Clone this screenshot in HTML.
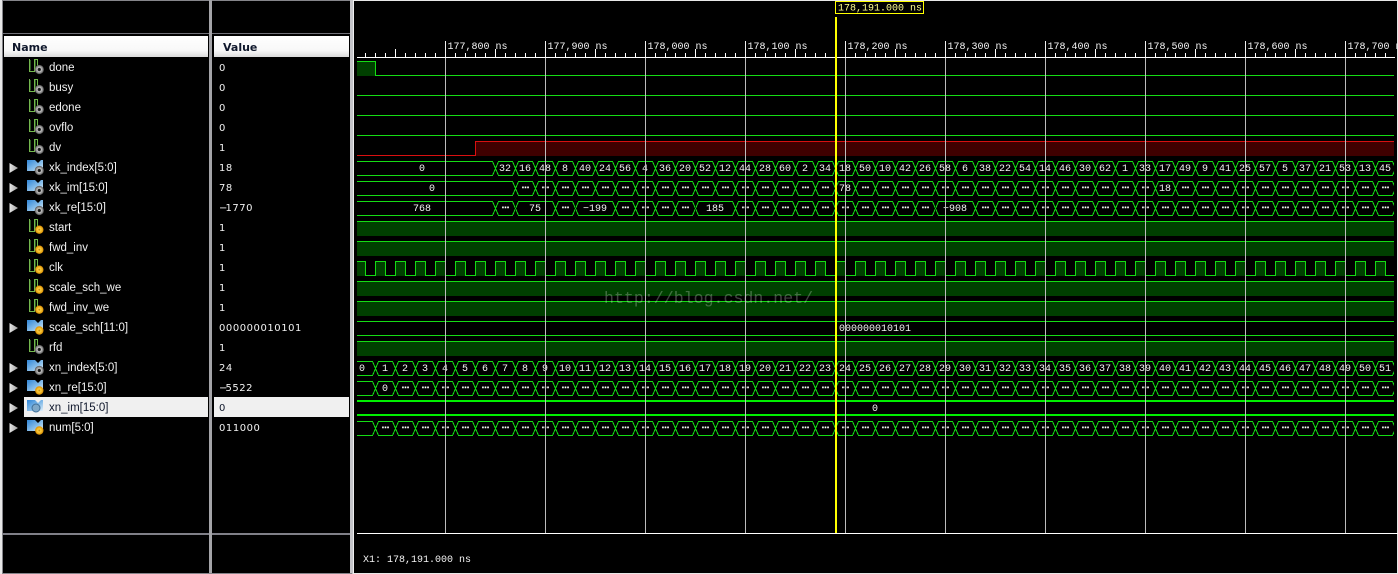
<!DOCTYPE html>
<html><head><meta charset="utf-8"><title>Waveform</title>
<style>
html,body{margin:0;padding:0;background:#000;width:1398px;height:574px;overflow:hidden}
svg{position:absolute;left:0;top:0;display:block}
.n{font:11.5px "Liberation Sans",sans-serif;fill:#f2f2f2}
.v{font:10px "DejaVu Sans",sans-serif;letter-spacing:.55px;fill:#f2f2f2}
.h{font:bold 11px "DejaVu Sans",sans-serif;fill:#10182c}
.t{font:10px "Liberation Mono",monospace;fill:#f4f4f4}
.c{text-anchor:middle}
</style></head><body>
<svg width="1398" height="574" viewBox="0 0 1398 574" xmlns="http://www.w3.org/2000/svg">
<defs>
<linearGradient id="hd" x1="0" y1="0" x2="0" y2="1"><stop offset="0" stop-color="#fff"/><stop offset=".7" stop-color="#f8f8f8"/><stop offset="1" stop-color="#dcdcdc"/></linearGradient>
<linearGradient id="ar" x1="0" y1="0" x2="1" y2="0"><stop offset="0" stop-color="#e8e8e8"/><stop offset="1" stop-color="#a0a0a0"/></linearGradient>
<linearGradient id="bl" x1="0" y1="0" x2="1" y2="1"><stop offset="0" stop-color="#2f86d8"/><stop offset=".6" stop-color="#8cc0ea"/><stop offset="1" stop-color="#e4f2fb"/></linearGradient>
<radialGradient id="gc"><stop offset="0" stop-color="#111"/><stop offset=".3" stop-color="#222"/><stop offset=".42" stop-color="#c4c4c4"/><stop offset=".8" stop-color="#808080"/><stop offset="1" stop-color="#444"/></radialGradient>
<radialGradient id="oc"><stop offset="0" stop-color="#b87800"/><stop offset=".35" stop-color="#ffd040"/><stop offset="1" stop-color="#d88c00"/></radialGradient>
<g id="wave"><path d="M29.5 59v12.5h5V59.5h3v8" fill="none" stroke="#74b84e" stroke-width="1"/><path d="M30.5 60v10.5M35.5 60v9" fill="none" stroke="#2c5a20"/></g>
<g id="lg"><use href="#wave"/><circle cx="39.3" cy="69.5" r="4.6" fill="url(#gc)"/></g>
<g id="lo"><use href="#wave"/><circle cx="39.3" cy="69.7" r="4.2" fill="url(#oc)"/></g>
<path id="fold" d="M27 60h8l3 3 3-3h2v11H27z" fill="url(#bl)"/>
<g id="bg"><use href="#fold"/><circle cx="39.3" cy="70.5" r="4.6" fill="url(#gc)"/></g>
<g id="bo"><use href="#fold"/><circle cx="39.3" cy="70.5" r="4.2" fill="url(#oc)"/></g>
<g id="bb"><use href="#fold"/><circle cx="36" cy="68" r="4" fill="#7fa8c8" stroke="#3f6f98"/></g>
<path id="arrow" d="M9.5 63v10l8.5-5z" fill="url(#ar)"/>
<pattern id="hx" patternUnits="userSpaceOnUse" x="355" y="161" width="20" height="20">
<polygon shape-rendering="crispEdges" points=".5,7.5 3.5,.5 17.5,.5 20.5,7.5 17.5,14.5 3.5,14.5" fill="none" stroke="#14dc14" stroke-width="1"/>
<polygon shape-rendering="crispEdges" points="-19.5,7.5 -16.5,.5 -2.5,.5 .5,7.5 -2.5,14.5 -16.5,14.5" fill="none" stroke="#14dc14" stroke-width="1"/>
</pattern>
<pattern id="hxd" patternUnits="userSpaceOnUse" x="355" y="161" width="20" height="20">
<polygon shape-rendering="crispEdges" points=".5,7.5 3.5,.5 17.5,.5 20.5,7.5 17.5,14.5 3.5,14.5" fill="none" stroke="#14dc14" stroke-width="1"/>
<polygon shape-rendering="crispEdges" points="-19.5,7.5 -16.5,.5 -2.5,.5 .5,7.5 -2.5,14.5 -16.5,14.5" fill="none" stroke="#14dc14" stroke-width="1"/>
<text x="10.5" y="7" text-anchor="middle" font-family="Liberation Sans,sans-serif" font-size="8" font-weight="bold" fill="#fff" stroke="#fff" stroke-width=".4">…</text>
</pattern>
<pattern id="clk" patternUnits="userSpaceOnUse" x="355" y="261" width="20" height="20">
<rect shape-rendering="crispEdges" x="1" y="1" width="10" height="14" fill="#004000"/>
<path shape-rendering="crispEdges" d="M0 14.5H.5V.5H10.5V14.5H20" fill="none" stroke="#14dc14" stroke-width="1"/>
</pattern>
<pattern id="tk" patternUnits="userSpaceOnUse" x="345" y="45" width="100" height="12">
<path shape-rendering="crispEdges" d="M10.5 8v4M20.5 8v4M30.5 8v4M40.5 8v4M50.5 4v8M60.5 8v4M70.5 8v4M80.5 8v4M90.5 8v4" stroke="#fff" stroke-width="1"/>
</pattern>
</defs>

<!-- panel frames -->
<rect x="0" y="0" width="1398" height="574" fill="#000"/>
<g shape-rendering="crispEdges">
<rect x="0" y="0" width="2" height="574" fill="#e8e8e8"/>
<rect x="2" y="0" width="1" height="574" fill="#85858a"/>
<rect x="2" y="0" width="350" height="1" fill="#85858a"/>
<rect x="209" y="0" width="3" height="574" fill="#a4a4a8"/>
<rect x="350" y="0" width="3" height="574" fill="#c4c4c8"/>
<rect x="353" y="0" width="1" height="574" fill="#eeeeee"/>
<rect x="354" y="0" width="1044" height="1" fill="#e8e8e8"/>
<rect x="1397" y="0" width="1" height="574" fill="#e8e8e8"/>
<rect x="3" y="33" width="206" height="1" fill="#707078"/>
<rect x="212" y="33" width="138" height="1" fill="#707078"/>
<rect x="3" y="533" width="206" height="2" fill="#808088"/>
<rect x="212" y="533" width="138" height="2" fill="#808088"/>
<rect x="2" y="573" width="350" height="1" fill="#85858a"/>
<rect x="354" y="573" width="1044" height="1" fill="#e8e8e8"/>
<rect x="4" y="36" width="204" height="21" fill="url(#hd)"/>
<rect x="214" y="36" width="135" height="21" fill="url(#hd)"/>
<rect x="24" y="397" width="184" height="20" fill="#f0f0f0"/>
<rect x="214" y="397" width="135" height="20" fill="#f0f0f0"/>
</g>
<text class="h" x="12" y="51">Name</text>
<text class="h" x="223" y="51">Value</text>

<!-- arrows -->
<use href="#arrow" y="100"/><use href="#arrow" y="120"/><use href="#arrow" y="140"/><use href="#arrow" y="260"/><use href="#arrow" y="300"/><use href="#arrow" y="320"/><use href="#arrow" y="340"/><use href="#arrow" y="360"/>
<!-- icons -->
<use href="#lg"/><use href="#lg" y="20"/><use href="#lg" y="40"/><use href="#lg" y="60"/><use href="#lg" y="80"/>
<use href="#bg" y="100"/><use href="#bg" y="120"/><use href="#bg" y="140"/>
<use href="#lo" y="160"/><use href="#lo" y="180"/><use href="#lo" y="200"/><use href="#lo" y="220"/><use href="#lo" y="240"/>
<use href="#bo" y="260"/><use href="#lg" y="280"/><use href="#bg" y="300"/><use href="#bo" y="320"/><use href="#bb" y="340"/><use href="#bo" y="360"/>

<!-- names -->
<text class="n" x="49" y="71">done</text>
<text class="n" x="49" y="91">busy</text>
<text class="n" x="49" y="111">edone</text>
<text class="n" x="49" y="131">ovflo</text>
<text class="n" x="49" y="151">dv</text>
<text class="n" x="49" y="171">xk_index[5:0]</text>
<text class="n" x="49" y="191">xk_im[15:0]</text>
<text class="n" x="49" y="211">xk_re[15:0]</text>
<text class="n" x="49" y="231">start</text>
<text class="n" x="49" y="251">fwd_inv</text>
<text class="n" x="49" y="271">clk</text>
<text class="n" x="49" y="291">scale_sch_we</text>
<text class="n" x="49" y="311">fwd_inv_we</text>
<text class="n" x="49" y="331">scale_sch[11:0]</text>
<text class="n" x="49" y="351">rfd</text>
<text class="n" x="49" y="371">xn_index[5:0]</text>
<text class="n" x="49" y="391">xn_re[15:0]</text>
<text class="n" x="49" y="411" style="fill:#10182c">xn_im[15:0]</text>
<text class="n" x="49" y="431">num[5:0]</text>

<!-- values -->
<text class="v" x="219" y="71">0</text>
<text class="v" x="219" y="91">0</text>
<text class="v" x="219" y="111">0</text>
<text class="v" x="219" y="131">0</text>
<text class="v" x="219" y="151">1</text>
<text class="v" x="219" y="171">18</text>
<text class="v" x="219" y="191">78</text>
<text class="v" x="219" y="211">−<tspan dx="-2.5">1770</tspan></text>
<text class="v" x="219" y="231">1</text>
<text class="v" x="219" y="251">1</text>
<text class="v" x="219" y="271">1</text>
<text class="v" x="219" y="291">1</text>
<text class="v" x="219" y="311">1</text>
<text class="v" x="219" y="331">000000010101</text>
<text class="v" x="219" y="351">1</text>
<text class="v" x="219" y="371">24</text>
<text class="v" x="219" y="391">−<tspan dx="-2.5">5522</tspan></text>
<text class="v" x="219" y="411" style="fill:#10182c">0</text>
<text class="v" x="219" y="431">011000</text>

<!-- waves -->
<g shape-rendering="crispEdges">
<rect x="357" y="62" width="19" height="14" fill="#004000"/>
<path d="M357 61.5H375.5V75.5H1394M357 95.5H1394M357 115.5H1394M357 135.5H1394" fill="none" stroke="#14dc14"/>
<rect x="476" y="142" width="918" height="14" fill="#400000"/>
<path d="M357 155.5H475.5V141.5H1394" fill="none" stroke="#d81010"/>

<rect x="357" y="222" width="1037" height="14" fill="#004000"/>
<rect x="357" y="242" width="1037" height="14" fill="#004000"/>
<rect x="357" y="282" width="1037" height="14" fill="#004000"/>
<rect x="357" y="302" width="1037" height="14" fill="#004000"/>
<rect x="357" y="342" width="1037" height="14" fill="#004000"/>
<path d="M357 221.5H1394M357 241.5H1394M357 281.5H1394M357 301.5H1394M357 341.5H1394M357 321.5H1394M357 335.5H1394" fill="none" stroke="#14dc14"/>
<rect x="357" y="261" width="1037" height="15" fill="url(#clk)"/>

<!-- bus flats -->
<path d="M357 161.5H492.5L495.5 168.5L492.5 175.5H357M357 181.5H512.5L515.5 188.5L512.5 195.5H357M357 201.5H492.5L495.5 208.5L492.5 215.5H357M357 361.5H372.5L375.5 368.5L372.5 375.5H357M357 381.5H372.5L375.5 388.5L372.5 395.5H357M357 421.5H372.5L375.5 428.5L372.5 435.5H357" fill="none" stroke="#14dc14"/>
<!-- wide bus cells on xk_re -->
<path d="M515.5 208.5L518.5 201.5H552.5L555.5 208.5L552.5 215.5H518.5ZM575.5 208.5L578.5 201.5H612.5L615.5 208.5L612.5 215.5H578.5ZM695.5 208.5L698.5 201.5H732.5L735.5 208.5L732.5 215.5H698.5ZM935.5 208.5L938.5 201.5H972.5L975.5 208.5L972.5 215.5H938.5Z" fill="none" stroke="#14dc14"/>
<!-- repeated cells -->
<rect x="495" y="161" width="899" height="15" fill="url(#hx)"/>
<rect x="515" y="181" width="320" height="15" fill="url(#hxd)"/>
<rect x="835" y="181" width="20" height="15" fill="url(#hx)"/>
<rect x="855" y="181" width="300" height="15" fill="url(#hxd)"/>
<rect x="1155" y="181" width="20" height="15" fill="url(#hx)"/>
<rect x="1175" y="181" width="219" height="15" fill="url(#hxd)"/>
<rect x="495" y="201" width="20" height="15" fill="url(#hxd)"/>
<rect x="555" y="201" width="20" height="15" fill="url(#hxd)"/>
<rect x="615" y="201" width="80" height="15" fill="url(#hxd)"/>
<rect x="735" y="201" width="200" height="15" fill="url(#hxd)"/>
<rect x="975" y="201" width="419" height="15" fill="url(#hxd)"/>
<rect x="375" y="361" width="1019" height="15" fill="url(#hx)"/>
<rect x="375" y="381" width="20" height="15" fill="url(#hx)"/>
<rect x="395" y="381" width="999" height="15" fill="url(#hxd)"/>
<rect x="375" y="421" width="1019" height="15" fill="url(#hxd)"/>
<rect x="357" y="400" width="1037" height="2" fill="#00f000"/>
<rect x="357" y="414" width="1037" height="2" fill="#00f000"/>
</g>

<!-- bus text -->
<g>
<text class="t c" x="422" y="171">0</text>
<text class="t c" x="505" y="171">32</text><text class="t c" x="525" y="171">16</text><text class="t c" x="545" y="171">48</text><text class="t c" x="565" y="171">8</text><text class="t c" x="585" y="171">40</text><text class="t c" x="605" y="171">24</text><text class="t c" x="625" y="171">56</text><text class="t c" x="645" y="171">4</text><text class="t c" x="665" y="171">36</text><text class="t c" x="685" y="171">20</text><text class="t c" x="705" y="171">52</text><text class="t c" x="725" y="171">12</text><text class="t c" x="745" y="171">44</text><text class="t c" x="765" y="171">28</text><text class="t c" x="785" y="171">60</text><text class="t c" x="805" y="171">2</text><text class="t c" x="825" y="171">34</text><text class="t c" x="845" y="171">18</text><text class="t c" x="865" y="171">50</text><text class="t c" x="885" y="171">10</text><text class="t c" x="905" y="171">42</text><text class="t c" x="925" y="171">26</text><text class="t c" x="945" y="171">58</text><text class="t c" x="965" y="171">6</text><text class="t c" x="985" y="171">38</text><text class="t c" x="1005" y="171">22</text><text class="t c" x="1025" y="171">54</text><text class="t c" x="1045" y="171">14</text><text class="t c" x="1065" y="171">46</text><text class="t c" x="1085" y="171">30</text><text class="t c" x="1105" y="171">62</text><text class="t c" x="1125" y="171">1</text><text class="t c" x="1145" y="171">33</text><text class="t c" x="1165" y="171">17</text><text class="t c" x="1185" y="171">49</text><text class="t c" x="1205" y="171">9</text><text class="t c" x="1225" y="171">41</text><text class="t c" x="1245" y="171">25</text><text class="t c" x="1265" y="171">57</text><text class="t c" x="1285" y="171">5</text><text class="t c" x="1305" y="171">37</text><text class="t c" x="1325" y="171">21</text><text class="t c" x="1345" y="171">53</text><text class="t c" x="1365" y="171">13</text><text class="t c" x="1385" y="171">45</text>
<text class="t c" x="432" y="191">0</text><text class="t c" x="845" y="191">78</text><text class="t c" x="1165" y="191">18</text>
<text class="t c" x="422" y="211">768</text><text class="t c" x="535" y="211">75</text><text class="t c" x="595" y="211">−199</text><text class="t c" x="715" y="211">185</text><text class="t c" x="955" y="211">−908</text>
<text class="t" x="839" y="331">000000010101</text>
<text class="t c" x="362" y="371">0</text><text class="t c" x="385" y="371">1</text><text class="t c" x="405" y="371">2</text><text class="t c" x="425" y="371">3</text><text class="t c" x="445" y="371">4</text><text class="t c" x="465" y="371">5</text><text class="t c" x="485" y="371">6</text><text class="t c" x="505" y="371">7</text><text class="t c" x="525" y="371">8</text><text class="t c" x="545" y="371">9</text><text class="t c" x="565" y="371">10</text><text class="t c" x="585" y="371">11</text><text class="t c" x="605" y="371">12</text><text class="t c" x="625" y="371">13</text><text class="t c" x="645" y="371">14</text><text class="t c" x="665" y="371">15</text><text class="t c" x="685" y="371">16</text><text class="t c" x="705" y="371">17</text><text class="t c" x="725" y="371">18</text><text class="t c" x="745" y="371">19</text><text class="t c" x="765" y="371">20</text><text class="t c" x="785" y="371">21</text><text class="t c" x="805" y="371">22</text><text class="t c" x="825" y="371">23</text><text class="t c" x="845" y="371">24</text><text class="t c" x="865" y="371">25</text><text class="t c" x="885" y="371">26</text><text class="t c" x="905" y="371">27</text><text class="t c" x="925" y="371">28</text><text class="t c" x="945" y="371">29</text><text class="t c" x="965" y="371">30</text><text class="t c" x="985" y="371">31</text><text class="t c" x="1005" y="371">32</text><text class="t c" x="1025" y="371">33</text><text class="t c" x="1045" y="371">34</text><text class="t c" x="1065" y="371">35</text><text class="t c" x="1085" y="371">36</text><text class="t c" x="1105" y="371">37</text><text class="t c" x="1125" y="371">38</text><text class="t c" x="1145" y="371">39</text><text class="t c" x="1165" y="371">40</text><text class="t c" x="1185" y="371">41</text><text class="t c" x="1205" y="371">42</text><text class="t c" x="1225" y="371">43</text><text class="t c" x="1245" y="371">44</text><text class="t c" x="1265" y="371">45</text><text class="t c" x="1285" y="371">46</text><text class="t c" x="1305" y="371">47</text><text class="t c" x="1325" y="371">48</text><text class="t c" x="1345" y="371">49</text><text class="t c" x="1365" y="371">50</text><text class="t c" x="1385" y="371">51</text>
<text class="t c" x="385" y="391">0</text>
<text class="t c" x="875" y="411">0</text>
</g>

<!-- time axis -->
<g shape-rendering="crispEdges">
<rect x="360" y="45" width="1035" height="12" fill="url(#tk)"/>
<rect x="357" y="57" width="1038" height="1" fill="#fff"/>
<rect x="357" y="533" width="1041" height="1" fill="#fff"/>
<path d="M445.5 41V57M545.5 41V57M645.5 41V57M745.5 41V57M845.5 41V57M945.5 41V57M1045.5 41V57M1145.5 41V57M1245.5 41V57M1345.5 41V57" stroke="#f0f0f0"/>
</g>
<text class="t" x="447.5" y="49">177,800 ns</text>
<text class="t" x="547.5" y="49">177,900 ns</text>
<text class="t" x="647.5" y="49">178,000 ns</text>
<text class="t" x="747.5" y="49">178,100 ns</text>
<text class="t" x="847.5" y="49">178,200 ns</text>
<text class="t" x="947.5" y="49">178,300 ns</text>
<text class="t" x="1047.5" y="49">178,400 ns</text>
<text class="t" x="1147.5" y="49">178,500 ns</text>
<text class="t" x="1247.5" y="49">178,600 ns</text>
<text class="t" x="1347.5" y="49">178,700 ns</text>

<!-- watermark -->
<text x="604" y="303" font-family="Liberation Mono,monospace" font-size="16.6" fill="#fff" fill-opacity=".25">http://blog.csdn.net/</text>

<!-- grid + cursor -->
<g shape-rendering="crispEdges">
<path d="M445.5 58V533M545.5 58V533M645.5 58V533M745.5 58V533M845.5 58V533M945.5 58V533M1045.5 58V533M1145.5 58V533M1245.5 58V533M1345.5 58V533" stroke="#bcbcbc"/>
<rect x="835" y="17" width="2" height="516" fill="#ffff00"/>
<rect x="835.5" y="1.5" width="88" height="12" fill="#000" stroke="#ffff00"/>
</g>
<text class="t" x="838" y="10.5" style="fill:#ffff90">178,191.000 ns</text>
<text class="t" x="363" y="562">X1: 178,191.000 ns</text>
</svg>
</body></html>
